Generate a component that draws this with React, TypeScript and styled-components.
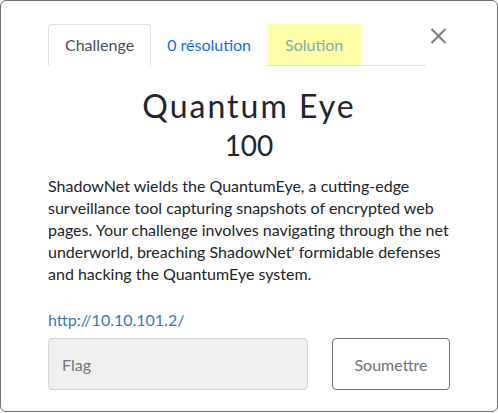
import React from "react";
import styled, { createGlobalStyle } from "styled-components";

const Global = createGlobalStyle`
  html, body { margin: 0; padding: 0; background: #ffffff; }
  body { font-family: Lato, "Noto Sans", sans-serif; color: #212529; }
  * { box-sizing: border-box; }
`;

const Modal = styled.div`
  width: 498px;
  height: 412px;
  border: 1px solid #6f6f6f;
  border-radius: 6px;
  background: #fff;
  padding: 23px 47px 0 47px;
  display: flex;
  flex-direction: column;
`;

const Header = styled.div`
  display: flex;
  align-items: flex-start;
`;

const Tabs = styled.ul`
  flex: 1;
  display: flex;
  list-style: none;
  margin: 0;
  padding: 0;
  border-bottom: 1px solid #dee2e6;
`;

const Tab = styled.li<{ $active?: boolean; $highlight?: boolean; $muted?: boolean; $pad?: number }>`
  margin-bottom: -1px;
  padding: 8px ${(p) => p.$pad ?? 16}px;
  font-size: 16px;
  line-height: 24px;
  border: 1px solid transparent;
  border-color: ${(p) => (p.$active ? "#dee2e6 #dee2e6 #fff" : p.$highlight ? "transparent transparent #dee2e6" : "transparent")};
  border-radius: ${(p) => (p.$highlight ? "0" : "4px 4px 0 0")};
  background: ${(p) => (p.$highlight ? "#ffffaa" : "#fff")};
  color: ${(p) => (p.$active ? "#495057" : p.$muted ? "#7fb0a3" : "#0d6efd")};
`;

const Close = styled.button`
  width: 24px;
  height: 24px;
  padding: 0;
  border: none;
  background: none;
  display: flex;
  align-items: center;
  justify-content: center;
`;

const Title = styled.h2`
  margin: 21px 0 3px;
  text-align: center;
  font-size: 32px;
  font-weight: 400;
  line-height: 38px;
  letter-spacing: 2px;
  color: #212529;
`;

const Value = styled.h3`
  margin: 0 0 13px;
  text-align: center;
  font-size: 28px;
  font-weight: 400;
  line-height: 34px;
  color: #212529;
`;

const Description = styled.p`
  margin: 0 0 23px;
  font-size: 16px;
  line-height: 22px;
  color: #212529;
`;

const Link = styled.a`
  display: block;
  font-size: 16px;
  line-height: 24px;
  color: #337ab7;
  text-decoration: none;
`;

const Form = styled.div`
  display: flex;
  justify-content: space-between;
  margin-top: 6px;
`;

const Input = styled.input`
  width: 260px;
  height: 52px;
  border: 1px solid #ced4da;
  border-radius: 4px;
  background: #efefef;
  padding: 0 13px;
  font-family: Lato, "Noto Sans", sans-serif;
  font-size: 16px;
  color: #495057;
  &::placeholder { color: #6c757d; }
`;

const Submit = styled.button`
  width: 118px;
  height: 52px;
  border: 1px solid #6c757d;
  border-radius: 4px;
  background: #fff;
  font-family: Lato, "Noto Sans", sans-serif;
  font-size: 16px;
  color: #6c757d;
`;

export default function App() {
  return (
    <>
      <Global />
      <Modal>
        <Header>
          <Tabs>
            <Tab $active>Challenge</Tab>
            <Tab $pad={15}>0 résolution</Tab>
            <Tab $highlight $muted $pad={17}>Solution</Tab>
          </Tabs>
          <Close aria-label="Close">
            <svg width="17" height="16" viewBox="0 0 17 16">
              <path d="M1.5 1 L15.5 15 M15.5 1 L1.5 15" stroke="#7a7a7a" strokeWidth="2" fill="none" />
            </svg>
          </Close>
        </Header>
        <Title>Quantum Eye</Title>
        <Value>100</Value>
        <Description>
          ShadowNet wields the QuantumEye, a cutting-edge surveillance tool capturing snapshots of
          encrypted web pages. Your challenge involves navigating through the net underworld,
          breaching ShadowNet' formidable defenses and hacking the QuantumEye system.
        </Description>
        <Link href="#">http://10.10.101.2/</Link>
        <Form>
          <Input placeholder="Flag" />
          <Submit>Soumettre</Submit>
        </Form>
      </Modal>
    </>
  );
}
